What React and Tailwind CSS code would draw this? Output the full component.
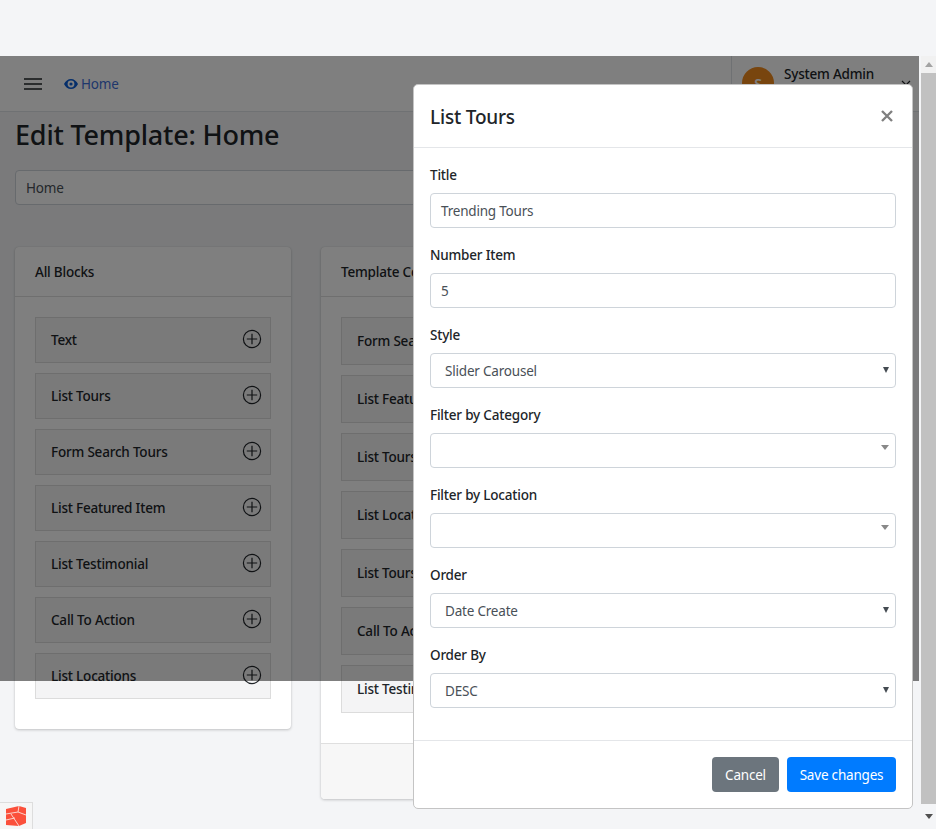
import React from 'react';

const leftBlocks = ['Text', 'List Tours', 'Form Search Tours', 'List Featured Item', 'List Testimonial', 'Call To Action', 'List Locations'];
const rightBlocks = ['Form Search Tours', 'List Featured Item', 'List Tours', 'List Locations', 'List Tours', 'Call To Action', 'List Testimonial'];

const PlusCircle = () => (
  <svg width="20" height="20" viewBox="0 0 20 20" fill="none" stroke="#212529" strokeWidth="1.2" className="absolute right-[8px] top-[11px]">
    <circle cx="10" cy="10" r="8.6" />
    <path d="M10 4.8v10.4M4.8 10h10.4" />
  </svg>
);

const Card = ({ title, blocks, tall }) => (
  <div className={`bg-white rounded-[4px] shadow-[0_0_1px_rgba(0,0,0,0.125),0_1px_3px_rgba(0,0,0,0.2)] shrink-0 ${tall ? 'w-[580px]' : 'w-[276px]'}`}>
    <div className="h-[50px] border-b border-[#dfdfdf] flex items-center px-5 pt-[2px] font-medium text-[13.5px] text-[#212529]">{title}</div>
    <div className="px-5 pt-5 pb-[30px] flex flex-col gap-[10px]">
      {blocks.map((b, i) => (
        <div key={i} className={`relative bg-[#f4f4f5] border border-[#dcdcdc] pl-[15px] flex items-center font-medium text-[13.5px] text-[#212529] ${tall ? 'h-[48px]' : 'h-[46px]'}`}>
          {b}
          <PlusCircle />
        </div>
      ))}
    </div>
    {tall && <div className="h-[56px] bg-[#f7f7f7] border-t border-[#dfdfdf] rounded-b-[4px]" />}
  </div>
);

const Caret = ({ gray }) =>
  gray ? (
    <svg width="8" height="5" viewBox="0 0 8 5" className="absolute right-[6px] top-[11px]">
      <path d="M0 0h8L4 5z" fill="#888888" />
    </svg>
  ) : (
    <svg width="6" height="6" viewBox="0 0 6 6" className="absolute right-[6px] top-[13px]">
      <path d="M0 0h6L3 6z" fill="#444b52" />
    </svg>
  );

const Field = ({ label, value, kind }) => (
  <div className="h-[80px]">
    <div className="h-[18px] leading-[18px] font-medium text-[13.5px] text-[#212529] mb-[9px]">{label}</div>
    <div className={`relative h-[35px] border border-[#ced4da] rounded-[4px] flex items-center pt-[2px] text-[13.5px] text-[#495057] ${kind === 'select' ? 'pl-[14px]' : 'pl-[10px]'}`}>
      {value}
      {kind === 'select' && <Caret />}
      {kind === 'select2' && <Caret gray />}
    </div>
  </div>
);

const Modal = () => (
  <div className="absolute left-[413px] top-[84px] w-[500px] h-[725px] bg-white border border-[#c4c4c4] rounded-[5px] flex flex-col">
    <div className="h-[63px] shrink-0 border-b border-[#e4e6e9] flex items-center justify-between pl-[16px] pr-[19px]">
      <span className="text-[19px] font-medium text-[#212529] mt-[2px]">List Tours</span>
      <svg width="12" height="12" viewBox="0 0 12 12" stroke="#808080" strokeWidth="2.4">
        <path d="M1 1l10 10M11 1L1 11" />
      </svg>
    </div>
    <div className="flex-1 pl-[16px] pr-[16px] pt-[18px]">
      <Field label="Title" value="Trending Tours" />
      <Field label="Number Item" value="5" />
      <Field label="Style" value="Slider Carousel" kind="select" />
      <Field label="Filter by Category" value="" kind="select2" />
      <Field label="Filter by Location" value="" kind="select2" />
      <Field label="Order" value="Date Create" kind="select" />
      <Field label="Order By" value="DESC" kind="select" />
    </div>
    <div className="h-[68px] shrink-0 border-t border-[#e4e6e9] flex items-start justify-end gap-2 pt-4 pr-4 text-[13.5px] text-white">
      <div className="w-[67px] h-[35px] pt-[2px] bg-[#6c757d] rounded-[4px] flex items-center justify-center">Cancel</div>
      <div className="w-[109px] h-[35px] pt-[2px] bg-[#007bff] rounded-[4px] flex items-center justify-center">Save changes</div>
    </div>
  </div>
);

const Scrollbar = () => (
  <div className="w-[17px] shrink-0 flex flex-col items-center pl-[2px] bg-[#f4f5f7]">
    <div className="w-full h-[17px] flex items-center justify-center bg-[#f1f1f1]">
      <svg width="8" height="5" viewBox="0 0 8 5"><path d="M4 0l4 5H0z" fill="#a3a3a3" /></svg>
    </div>
    <div className="w-full h-[731px] bg-[#c1c1c1]" />
    <div className="w-full flex-1 flex items-center justify-center">
      <svg width="8" height="5" viewBox="0 0 8 5"><path d="M0 0h8L4 5z" fill="#505050" /></svg>
    </div>
  </div>
);

export default function App() {
  return (
    <div className="relative w-[936px] h-[829px] overflow-hidden bg-[#f4f5f7] tracking-[-0.2px] font-['Noto_Sans','Open_Sans',sans-serif]">
      <div className="h-14" />
      <div className="flex h-[773px]">
        <div className="w-[919px] shrink-0 overflow-hidden">
          {/* top navbar */}
          <div className="h-[56px] bg-white border-b border-[#dee2e6] flex items-center">
            <svg width="18" height="12" viewBox="0 0 18 12" stroke="#212529" strokeWidth="1.6" className="ml-[24px]">
              <path d="M0 1h18M0 6h18M0 11h18" />
            </svg>
            <svg width="14" height="10" viewBox="0 0 14 10" className="ml-[22px]" fill="#0b5ed7">
              <path fillRule="evenodd" d="M7 0c3 0 5.600 2 7 5-1.400 3-4 5-7 5S1.400 8 0 5c1.400-3 4-5 7-5zm0 1.600a3.400 3.400 0 100 6.800 3.400 3.400 0 000-6.800zM7 3.400a1.600 1.600 0 110 3.200 1.600 1.600 0 010-3.200z" />
            </svg>
            <span className="ml-[3px] pt-[2px] text-[13.5px] text-[#3f6fd8]">Home</span>
            <div className="ml-auto w-[188px] h-full border-l border-[#dee2e6] relative">
              <div className="absolute left-[10px] top-[11px] w-8 h-8 rounded-full bg-[#f08a1d] text-white flex items-center justify-center text-[14px] font-semibold">S</div>
              <div className="absolute left-[52px] top-[8px] text-[13.5px] font-medium text-[#212529]">System Admin</div>
              <svg width="10" height="6" viewBox="0 0 10 6" fill="none" stroke="#212529" strokeWidth="1.2" className="absolute right-[8px] top-[24px]">
                <path d="M1 1l4 4 4-4" />
              </svg>
            </div>
          </div>
          <div className="px-[15px]">
            <h1 className="text-[27px] leading-[34px] font-medium text-[#212529] mt-[6px]">Edit Template: Home</h1>
            <div className="mt-[18px] h-[35px] border border-[#ced4da] bg-white rounded-[4px] flex items-center pl-[10px] pt-[1px] text-[13.5px] text-[#495057]">Home</div>
            <div className="flex gap-[30px] mt-[42px] items-start">
              <Card title="All Blocks" blocks={leftBlocks} />
              <Card title="Template Content" blocks={rightBlocks} tall />
            </div>
          </div>
        </div>
        <Scrollbar />
      </div>
      <div className="absolute left-0 top-[56px] w-[919px] h-[625px] bg-black/50" />
      <Modal />
      {/* debug bar logo */}
      <div className="absolute left-0 bottom-0 w-[33px] h-[27px] bg-[#f6f6f6] border-t border-r border-[#dddddd] flex items-center justify-center">
        <svg width="20" height="20" viewBox="0 0 20 20">
          <path d="M0 3l13-3 7 2v15l-7 3-13-1z" fill="#fb503b" />
          <path d="M0 8l12-2 8 3M5 8l8 12M13 0l-1 6M0 14l9-2" stroke="#fbd3cc" strokeWidth="1" fill="none" />
        </svg>
      </div>
    </div>
  );
}
